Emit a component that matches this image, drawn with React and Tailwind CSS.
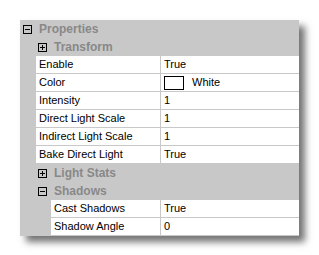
import React from "react";

function Box({ plus }) {
  return (
    <span className="relative inline-block w-[9px] h-[9px] border border-black bg-transparent shrink-0">
      <span className="absolute left-[1px] top-[3px] w-[5px] h-[1px] bg-black" />
      {plus && <span className="absolute left-[3px] top-[1px] w-[1px] h-[5px] bg-black" />}
    </span>
  );
}

function Header({ label, plus, indent }) {
  return (
    <div className="flex items-center h-[18px]" style={{ paddingLeft: indent }}>
      <Box plus={plus} />
      <span className="ml-[7px] font-bold text-[12px] text-[#888888] leading-none">{label}</span>
    </div>
  );
}

function Row({ name, value, indent = 16, children }) {
  return (
    <div className="flex h-[18px] pb-[1px]" style={{ paddingLeft: indent }}>
      <div className="bg-white flex-1 flex items-center pl-[3px] text-[11px] text-black leading-none">{name}</div>
      <div className="w-[1px]" />
      <div className="bg-white w-[138px] flex items-center pl-[3px] text-[11px] text-black leading-none">
        {children || value}
      </div>
    </div>
  );
}

export default function App() {
  return (
    <div className="w-[319px] h-[255px] bg-white pt-[20px] pl-[20px]" style={{ fontFamily: '"Liberation Sans", Arial, sans-serif' }}>
      <div className="w-[279px] bg-[#c8c8c8] shadow-[6px_6px_7px_rgba(0,0,0,0.55)]">
        <Header label="Properties" indent={3} />
        <Header label="Transform" plus indent={18} />
        <Row name="Enable" value="True" />
        <Row name="Color">
          <span className="w-[20px] h-[14px] border border-black bg-white" />
          <span className="ml-[8px]">White</span>
        </Row>
        <Row name="Intensity" value="1" />
        <Row name="Direct Light Scale" value="1" />
        <Row name="Indirect Light Scale" value="1" />
        <Row name="Bake Direct Light" value="True" />
        <Header label="Light Stats" plus indent={18} />
        <Header label="Shadows" indent={18} />
        <Row name="Cast Shadows" value="True" indent={31} />
        <Row name="Shadow Angle" value="0" indent={31} />
      </div>
    </div>
  );
}
